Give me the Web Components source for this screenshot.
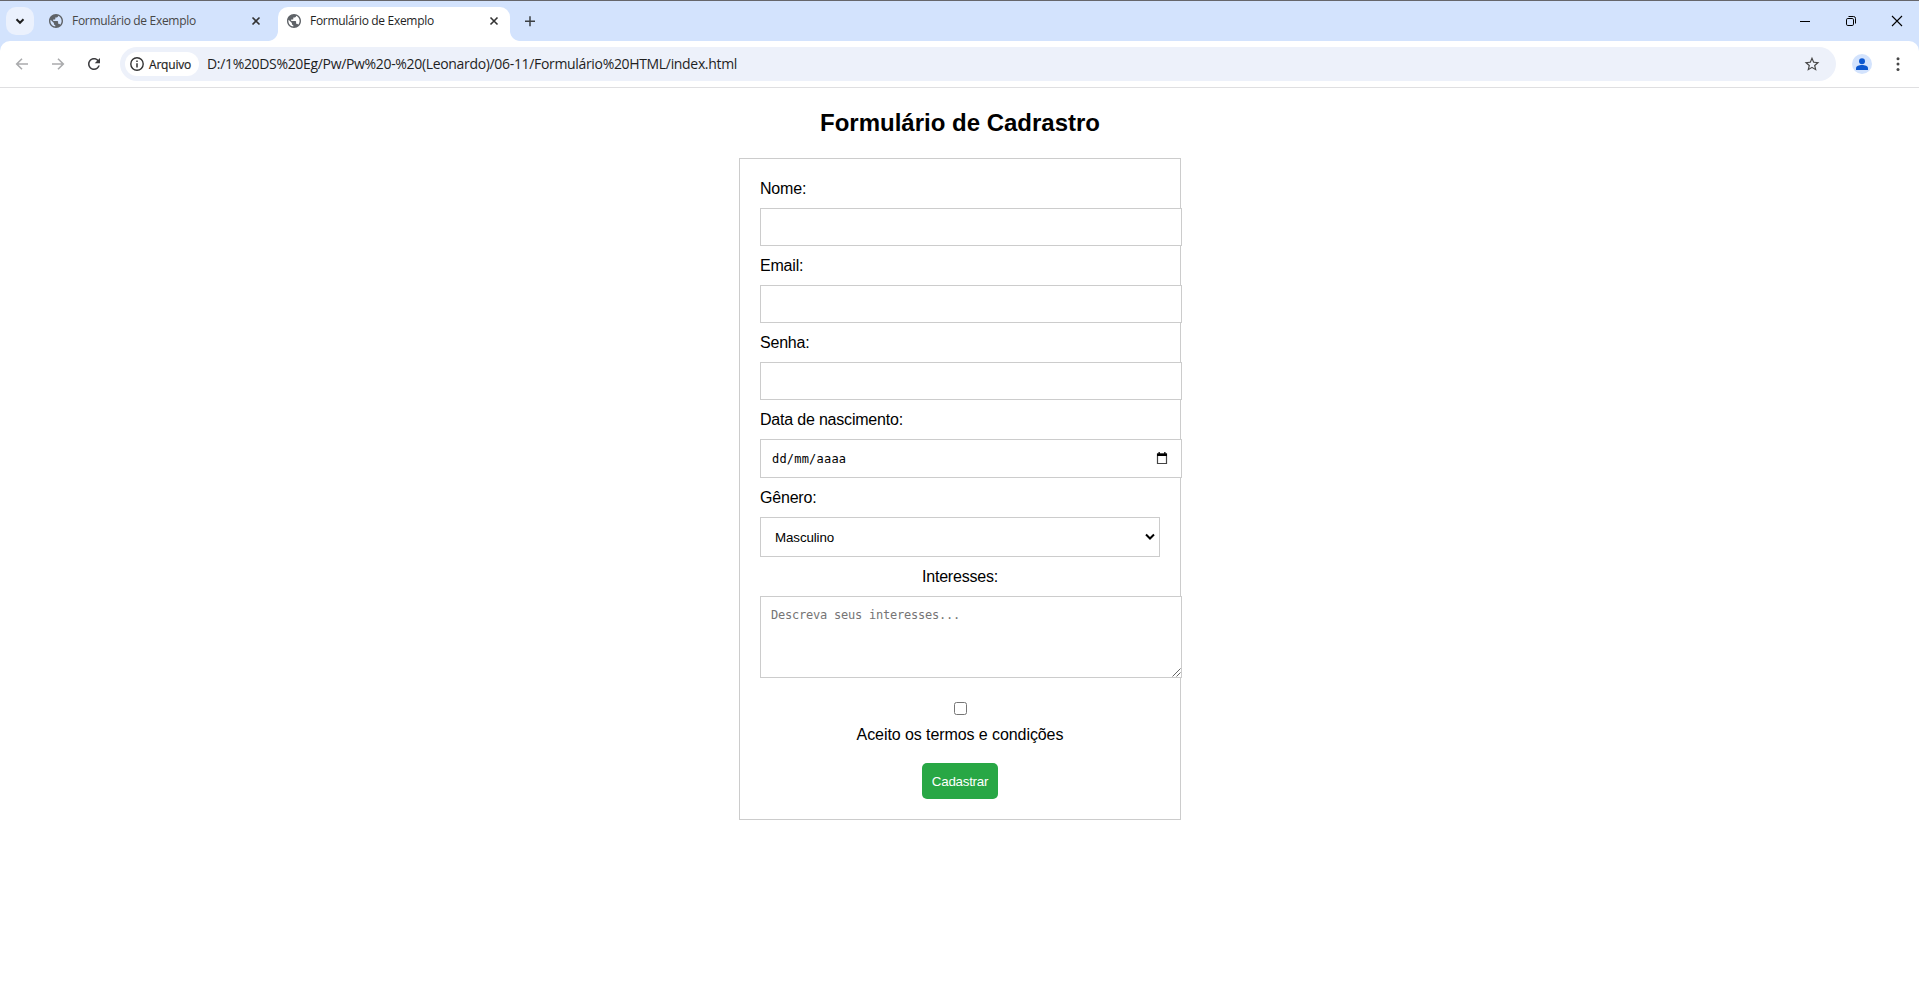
<!DOCTYPE html>
<html lang="pt-BR">
<head>
<meta charset="utf-8">
<title>Formulário de Exemplo</title>
<style>
html,body{margin:0;height:100%;overflow:hidden;background:#fff}
body{font-family:"Liberation Sans",Arial,sans-serif}
</style>
</head>
<body>
<browser-window>
  <tab-strip slot="tabs">
    <browser-tab>Formulário de Exemplo</browser-tab>
    <browser-tab active>Formulário de Exemplo</browser-tab>
  </tab-strip>
  <tool-bar slot="toolbar" chip="Arquivo">D:/1%20DS%20Eg/Pw/Pw%20-%20(Leonardo)/06-11/Formulário%20HTML/index.html</tool-bar>
  <signup-page>
    <form-field label="Nome:"></form-field>
    <form-field label="Email:"></form-field>
    <form-field label="Senha:"></form-field>
    <form-field label="Data de nascimento:" kind="date">dd/mm/aaaa</form-field>
    <form-field label="Gênero:" kind="select">Masculino</form-field>
    <form-field label="Interesses:" kind="area">Descreva seus interesses...</form-field>
    <terms-check>Aceito os termos e condições</terms-check>
    <submit-button>Cadastrar</submit-button>
  </signup-page>
</browser-window>
<script>
function define(name, html) {
  customElements.define(name, class extends HTMLElement {
    constructor() {
      super();
      this.attachShadow({mode: 'open'}).innerHTML = typeof html === 'function' ? html(this) : html;
    }
  });
}

define('browser-window', `<style>
:host{display:flex;flex-direction:column;width:100%;height:984px;background:#fff}
</style><slot name="tabs"></slot><slot name="toolbar"></slot><slot></slot>`);

define('tab-strip', `<style>
:host{display:flex;box-sizing:border-box;height:41px;flex:none;border-top:1px solid #66666b;background:#d3e3fd;padding-left:6px}
.search{width:28px;height:28px;margin-top:6px;border-radius:10px;background:#ebf1fd;flex:none}
.tabs{display:flex;margin-left:2px;padding-top:6px}
.plus{margin:6px 0 0 6px;width:28px;height:28px}
.win{display:flex;margin-left:auto;height:40px}
.win svg{width:46px;height:40px}
svg{display:block}
</style>
<div class="search"><svg width="28" height="28"><path d="M10.500 12.300l3.500 3.500 3.500-3.500" fill="none" stroke="#1f1f1f" stroke-width="2"/></svg></div>
<div class="tabs"><slot></slot></div>
<svg class="plus" viewBox="0 0 28 28"><path d="M9 14.200h10M14 9.200v10" stroke="#3c4043" stroke-width="1.500" fill="none"/></svg>
<div class="win">
<svg viewBox="0 0 46 40"><path d="M19 20.500h10" stroke="#000" fill="none"/></svg>
<svg viewBox="0 0 46 40" fill="none" stroke="#000"><rect x="19.500" y="17.500" width="7" height="7" rx="1.300"/><path d="M21.500 15.500h5a2 2 0 0 1 2 2v5"/></svg>
<svg viewBox="0 0 46 40"><path d="M19 15l10 10M29 15l-10 10" stroke="#000" stroke-width="1.100" fill="none"/></svg>
</div>`);

define('browser-tab', `<style>
:host{display:flex;align-items:center;position:relative;box-sizing:border-box;width:232px;height:34px;padding:0 9px 6px 9px;margin-left:4px;font:12px "Open Sans","Noto Sans",sans-serif;color:#474747}
:host([active]){background:#fff;border-radius:10px 10px 0 0;color:#1f1f1f;margin-left:6px}
:host([active])::before,:host([active])::after{content:"";position:absolute;bottom:0;width:10px;height:10px}
:host([active])::before{left:-10px;background:radial-gradient(circle at 0 0,transparent 9.5px,#fff 10.3px)}
:host([active])::after{right:-10px;background:radial-gradient(circle at 100% 0,transparent 9.5px,#fff 10.3px)}
.t{margin-left:9px;letter-spacing:-.31px;white-space:nowrap;position:relative;top:-1px}
.x{margin-left:auto}
svg{display:block}
</style>
<svg width="14" height="14" viewBox="2 2 20 20"><path fill="#5f6368" d="M12 2C6.480 2 2 6.480 2 12s4.480 10 10 10 10-4.480 10-10S17.520 2 12 2zm-1 17.930c-3.950-.49-7-3.850-7-7.930 0-.62.08-1.210.21-1.790L9 15v1c0 1.100.9 2 2 2v1.930zm6.900-2.540c-.26-.81-1-1.390-1.900-1.390h-1v-3c0-.55-.45-1-1-1H8v-2h2c.55 0 1-.45 1-1V7h2c1.100 0 2-.9 2-2v-.41c2.930 1.190 5 4.060 5 7.410 0 2.080-.8 3.970-2.100 5.390z"/></svg>
<span class="t"><slot></slot></span>
<svg class="x" width="14" height="14"><path d="M3.500 3.500l7 7M10.500 3.500l-7 7" stroke="#333" stroke-width="1.600" fill="none"/></svg>`);

define('tool-bar', el => `<style>
:host{display:block;flex:none;height:47px;box-sizing:border-box;background:#d3e3fd;font-family:"Open Sans","Noto Sans",sans-serif;color:#1f1f1f}
.bar{display:flex;align-items:flex-start;height:47px;box-sizing:border-box;background:#fff;border-bottom:1px solid #dfdfe1;border-radius:10px 10px 0 0;padding:6px 7px 0 5px}
svg{display:block;flex:none}
.nav{display:flex}
.omni{display:flex;align-items:center;box-sizing:border-box;width:1716px;height:34px;margin-left:7px;padding:0 14px 0 5px;border-radius:17px;background:#edf1fa}
.chip{display:flex;align-items:center;box-sizing:border-box;width:74px;height:24px;border-radius:12px;background:#fff;padding-left:5px;font-size:12px;font-weight:500;white-space:nowrap}
.chip span{margin-left:5px;letter-spacing:-.2px;-webkit-text-stroke:.2px #1f1f1f}
.url{margin:-2px 0 0 8px;font-size:14px;letter-spacing:-.33px;white-space:nowrap}
.star{margin-left:auto}
</style><div class="bar">
<div class="nav">
<svg width="36" height="34" fill="none" stroke="#aaabad" stroke-width="1.600"><path d="M23 17H12.300M17 11.700L11.700 17l5.300 5.300"/></svg>
<svg width="36" height="34" fill="none" stroke="#aaabad" stroke-width="1.600"><path d="M11 17h10.700M17 11.700l5.300 5.300-5.300 5.300"/></svg>
<svg width="36" height="34"><path transform="translate(8 8) scale(.75)" fill="#3c3c3f" d="M17.650 6.350C16.200 4.900 14.210 4 12 4c-4.420 0-7.990 3.580-7.990 8s3.570 8 7.990 8c3.730 0 6.840-2.550 7.730-6h-2.080c-.82 2.330-3.040 4-5.650 4-3.310 0-6-2.690-6-6s2.690-6 6-6c1.660 0 3.140.69 4.220 1.780L13 11h7V4l-2.350 2.350z"/></svg>
</div>
<div class="omni">
<div class="chip"><svg width="14" height="14"><circle cx="7" cy="7" r="6.200" fill="none" stroke="#333" stroke-width="1.400"/><path d="M7 6.200v4.200M7 3.600v1.500" stroke="#333" stroke-width="1.500"/></svg><span>${el.getAttribute('chip')}</span></div>
<span class="url"><slot></slot></span>
<svg class="star" width="20" height="20" viewBox="0 0 20 20"><path transform="translate(1.100 1.300) scale(.74)" fill="#474747" d="M22 9.240l-7.190-.62L12 2 9.190 8.630 2 9.240l5.460 4.730L5.820 21 12 17.270 18.180 21l-1.630-7.030L22 9.240zM12 15.400l-3.760 2.270 1-4.280-3.320-2.880 4.380-.38L12 6.100l1.710 4.040 4.380.38-3.320 2.880 1 4.280L12 15.400z"/></svg>
</div>
<svg style="margin-left:16px" width="20" height="34" viewBox="0 0 20 34"><circle cx="10" cy="17" r="10" fill="#d3e3fd"/><circle cx="10" cy="14.200" r="3" fill="#0b57d0"/><path d="M4 23v-1.800c0-2 3-3.200 6-3.200s6 1.200 6 3.200V23z" fill="#0b57d0"/></svg>
<svg style="margin-left:18px" width="16" height="34" fill="#474747"><circle cx="8" cy="11.700" r="1.500"/><circle cx="8" cy="17.100" r="1.500"/><circle cx="8" cy="22.500" r="1.500"/></svg>
</div>`);

define('signup-page', `<style>
:host{display:block;padding-top:21px;font-size:16px;color:#000}
h1{margin:0;width:1920px;text-align:center;font-size:24px;line-height:28px;height:28px}
.form{box-sizing:border-box;width:442px;height:662px;margin:21px 0 0 739px;border:1px solid #ccc;padding:20px;display:flex;flex-direction:column;align-items:flex-start}
</style><h1>Formulário de Cadrastro</h1><div class="form"><slot></slot></div>`);

const controls = {
  text: `<div class="box"></div>`,
  date: `<div class="box date"><slot></slot><svg width="12" height="13" viewBox="0 0 12 13"><path d="M1.500 2v9.500h9V2z" fill="none" stroke="#444" stroke-width="1.200"/><path d="M1 1.500h10v2.500H1zM2.500 0h1.300v2H2.500zM8.200 0h1.300v2H8.200z" fill="#000"/></svg></div>`,
  select: `<div class="box select"><slot></slot><svg width="10" height="8"><path d="M1 1.500l4 4 4-4" fill="none" stroke="#000" stroke-width="2"/></svg></div>`,
  area: `<div class="box area"><slot></slot><svg width="9" height="9"><path d="M.5 8.500l8-8M4.500 8.500l4-4" fill="none" stroke="#666" stroke-width="1"/></svg></div>`
};
define('form-field', el => `<style>
:host{display:block;width:400px}
label{display:block;line-height:20px;height:18px;letter-spacing:-.2px}
:host([kind=area]) label{text-align:center}
.box{box-sizing:border-box;width:422px;height:38px;margin:11px 0 10px;border:1px solid #ccc;background:#fff;display:flex;align-items:center}
.date{height:39px;padding:0 13px 0 11px;font:12px "DejaVu Sans Mono",monospace;letter-spacing:.2px}
.date svg,.select svg{margin-left:auto}
.select{width:400px;height:40px;margin-bottom:10px;padding:0 4px 0 14px;font-size:13.333px;letter-spacing:-.1px}
.area{height:82px;margin-bottom:24px;align-items:flex-start;padding:11px 10px;font:12px/15px "DejaVu Sans Mono",monospace;letter-spacing:-.22px;color:#757575;position:relative}
.area svg{position:absolute;right:0;bottom:0}
</style><label>${el.getAttribute('label')}</label>${controls[el.getAttribute('kind') || 'text']}`);

define('terms-check', `<style>
:host{display:flex;flex-direction:column;align-items:center;width:400px}
input{appearance:none;box-sizing:border-box;margin:0;width:13px;height:13px;border:1px solid #767676;border-radius:2.500px;background:#fff}
label{margin-top:11px;line-height:18px;height:18px;letter-spacing:-.08px}
</style><input type="checkbox"><label><slot></slot></label>`);

define('submit-button', `<style>
:host{display:flex;justify-content:center;width:400px}
button{box-sizing:border-box;width:76px;height:36px;margin:19px 0 0;padding:0;border:0;border-radius:5px;background:#28a745;color:#fff;font:13.333px "Liberation Sans",Arial,sans-serif;letter-spacing:-.25px}
</style><button><slot></slot></button>`);
</script>
</body>
</html>
